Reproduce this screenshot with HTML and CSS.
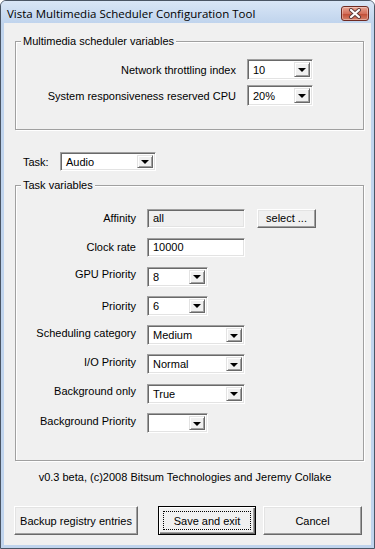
FILE: index.html
```html
<!DOCTYPE html>
<html lang="en">
<head>
    <meta charset="UTF-8">
    <meta name="viewport" content="width=device-width, initial-scale=1.0">
    <title>Vista Multimedia Scheduler Configuration Tool</title>
    <link rel="stylesheet" href="styles.css">
</head>
<body>

<div class="window">
    <!-- Title bar -->
    <div class="titlebar">
        <span class="title">Vista Multimedia Scheduler Configuration Tool</span>
        <button class="close-btn" aria-label="Close">
            <svg width="14" height="11" viewBox="0 0 14 11">
                <path d="M3 2 L11 9 M11 2 L3 9" stroke="#5a3a3a" stroke-width="4" stroke-linecap="round"/>
                <path d="M3 2 L11 9 M11 2 L3 9" stroke="#ffffff" stroke-width="2.2" stroke-linecap="round"/>
            </svg>
        </button>
    </div>

    <div class="client">
        <!-- Multimedia scheduler variables -->
        <fieldset class="group group-mm">
            <legend>Multimedia scheduler variables</legend>
            <div class="mm-grid">
                <span class="lbl">Network throttling index</span>
                <div class="combo combo-mm"><span class="val">10</span><span class="arrow"></span></div>
                <span class="lbl">System responsiveness reserved CPU</span>
                <div class="combo combo-mm"><span class="val">20%</span><span class="arrow"></span></div>
            </div>
        </fieldset>

        <div class="task-row">
            <span class="task-lbl">Task:</span>
            <div class="combo combo-task"><span class="val">Audio</span><span class="arrow"></span></div>
        </div>

        <!-- Task variables -->
        <fieldset class="group group-task">
            <legend>Task variables</legend>
            <div class="task-grid">
                <span class="lbl">Affinity</span>
                <div class="cell">
                    <div class="edit edit-disabled"><span class="val">all</span></div>
                    <button class="btn btn-select">select ...</button>
                </div>

                <span class="lbl">Clock rate</span>
                <div class="cell">
                    <div class="edit"><span class="val">10000</span></div>
                </div>

                <span class="lbl lbl-up">GPU Priority</span>
                <div class="cell">
                    <div class="combo combo-sm"><span class="val">8</span><span class="arrow"></span></div>
                </div>

                <span class="lbl">Priority</span>
                <div class="cell">
                    <div class="combo combo-sm"><span class="val">6</span><span class="arrow"></span></div>
                </div>

                <span class="lbl lbl-up">Scheduling category</span>
                <div class="cell">
                    <div class="combo combo-lg"><span class="val">Medium</span><span class="arrow"></span></div>
                </div>

                <span class="lbl lbl-up">I/O Priority</span>
                <div class="cell">
                    <div class="combo combo-lg"><span class="val">Normal</span><span class="arrow"></span></div>
                </div>

                <span class="lbl lbl-up">Background only</span>
                <div class="cell">
                    <div class="combo combo-lg"><span class="val">True</span><span class="arrow"></span></div>
                </div>

                <span class="lbl lbl-up">Background Priority</span>
                <div class="cell">
                    <div class="combo combo-sm"><span class="val"></span><span class="arrow"></span></div>
                </div>
            </div>
        </fieldset>

        <p class="credits">v0.3 beta, (c)2008 Bitsum Technologies and Jeremy Collake</p>

        <div class="button-row">
            <button class="btn btn-backup">Backup registry entries</button>
            <button class="btn btn-default btn-save"><span class="focus">Save and exit</span></button>
            <button class="btn btn-cancel">Cancel</button>
        </div>
    </div>
</div>

</body>
</html>
```

FILE: styles.css
```css
body {
    margin: 0;
    background: #ffffff;
    font-family: 'Liberation Sans', Arial, sans-serif;
    font-size: 11px;
    color: #000;
}

/* Window frame (Vista basic) */
.window {
    width: 375px;
    height: 549px;
    box-sizing: border-box;
    border: 1px solid #4a5564;
    border-radius: 6px 6px 0 0;
    background: #c0d4ed;
    display: flex;
    flex-direction: column;
    padding: 0 3px 3px 3px;
}

.titlebar {
    height: 22px;
    display: flex;
    align-items: center;
    justify-content: space-between;
    background: linear-gradient(#d9e6f6, #c0d4ed);
    margin: 0 -3px;
    padding: 0 5px 0 6px;
    border-radius: 5px 5px 0 0;
}

.title {
    font-family: 'Open Sans', 'Noto Sans', sans-serif;
    font-size: 11.5px;
    color: #000;
    padding-top: 2px;
}

.close-btn {
    width: 28px;
    height: 15px;
    padding: 0;
    margin-top: 2px;
    border: 1px solid #6e2a22;
    border-radius: 3px;
    background: linear-gradient(#e8a493, #d4705c 50%, #c04a33 51%, #d5806a);
    display: flex;
    align-items: center;
    justify-content: center;
    box-shadow: inset 0 0 0 1px rgba(255, 255, 255, 0.35);
}

.client {
    flex: 1;
    background: #f0f0f0;
    display: flex;
    flex-direction: column;
}

/* Group boxes */
.group {
    margin: 0 0 0 11px;
    padding: 0;
    width: 349px;
    box-sizing: border-box;
    border: 1px solid #a0a0a0;
    box-shadow: inset 1px 1px 0 #fff, 1px 1px 0 #fff;
    min-width: 0;
}

.group legend {
    margin-left: 5px;
    padding: 0 2px;
    line-height: 13px;
    background: #f0f0f0;
}

.group-mm {
    margin-top: 12px;
    padding: 11px 50px 23px 0;
}

.mm-grid {
    display: grid;
    grid-template-columns: 1fr 66px;
    column-gap: 11px;
    row-gap: 5px;
    align-items: center;
}

.lbl {
    justify-self: end;
    white-space: nowrap;
}

.lbl-up {
    margin-bottom: 5px;
}

/* Sunken 3D controls */
.combo,
.edit {
    box-sizing: border-box;
    height: 20px;
    background: #fff;
    border-top: 1px solid #a0a0a0;
    border-left: 1px solid #a0a0a0;
    border-right: 1px solid #fff;
    border-bottom: 1px solid #fff;
    box-shadow: inset 1px 1px 0 #696969, inset -1px -1px 0 #e3e3e3;
    display: flex;
    align-items: center;
    padding: 2px;
}

.val {
    flex: 1;
    padding-left: 3px;
    white-space: nowrap;
}

.arrow {
    width: 16px;
    height: 100%;
    box-sizing: border-box;
    background: #f0f0f0;
    border-top: 1px solid #e3e3e3;
    border-left: 1px solid #e3e3e3;
    border-right: 1px solid #696969;
    border-bottom: 1px solid #696969;
    box-shadow: inset 1px 1px 0 #fff, inset -1px -1px 0 #a0a0a0;
    display: flex;
    align-items: center;
    justify-content: center;
}

.arrow::after {
    content: "";
    border-left: 4px solid transparent;
    border-right: 4px solid transparent;
    border-top: 4px solid #000;
    margin-top: 1px;
}

.combo-mm {
    width: 66px;
    height: 21px;
}

.combo-task {
    width: 96px;
    height: 19px;
}

.combo-sm {
    width: 61px;
}

.combo-lg {
    width: 98px;
}

.task-row {
    display: flex;
    align-items: center;
    margin-top: 22px;
    padding-left: 19px;
}

.task-lbl {
    width: 37px;
}

.group-task {
    margin-top: 8px;
    padding: 16px 0 27px 0;
}

.task-grid {
    display: grid;
    grid-template-columns: 120px 1fr;
    column-gap: 11px;
    row-gap: 9.3px;
    align-items: center;
}

.cell {
    display: flex;
    align-items: center;
    gap: 12px;
    height: 20px;
}

.edit {
    width: 98px;
    height: 19px;
}

.edit-disabled {
    background: #f0f0f0;
}

/* Raised buttons */
.btn {
    box-sizing: border-box;
    font-family: inherit;
    font-size: 11px;
    color: #000;
    background: #f0f0f0;
    border-top: 1px solid #fff;
    border-left: 1px solid #fff;
    border-right: 1px solid #696969;
    border-bottom: 1px solid #696969;
    box-shadow: inset -1px -1px 0 #a0a0a0, inset 1px 1px 0 #e3e3e3;
    padding: 0;
    border-radius: 0;
    white-space: nowrap;
}

.btn-select {
    width: 59px;
    height: 19px;
}

.credits {
    margin: 10px 0 0 0;
    line-height: 13px;
    text-align: center;
    padding-right: 5px;
}

.button-row {
    display: flex;
    margin-top: 22px;
    padding-left: 10px;
}

.button-row .btn {
    height: 29px;
}

.btn-backup {
    width: 124px;
}

.btn-save {
    width: 98px;
    margin-left: 20px;
    border: 1px solid #000;
    box-shadow: inset 1px 1px 0 #fff, inset -1px -1px 0 #696969, inset -2px -2px 0 #a0a0a0;
    display: flex;
    padding: 4px;
}

.btn-save .focus {
    flex: 1;
    border: 1px dotted #000;
    display: flex;
    align-items: center;
    justify-content: center;
}

.btn-cancel {
    width: 99px;
    margin-left: 7px;
}
```
